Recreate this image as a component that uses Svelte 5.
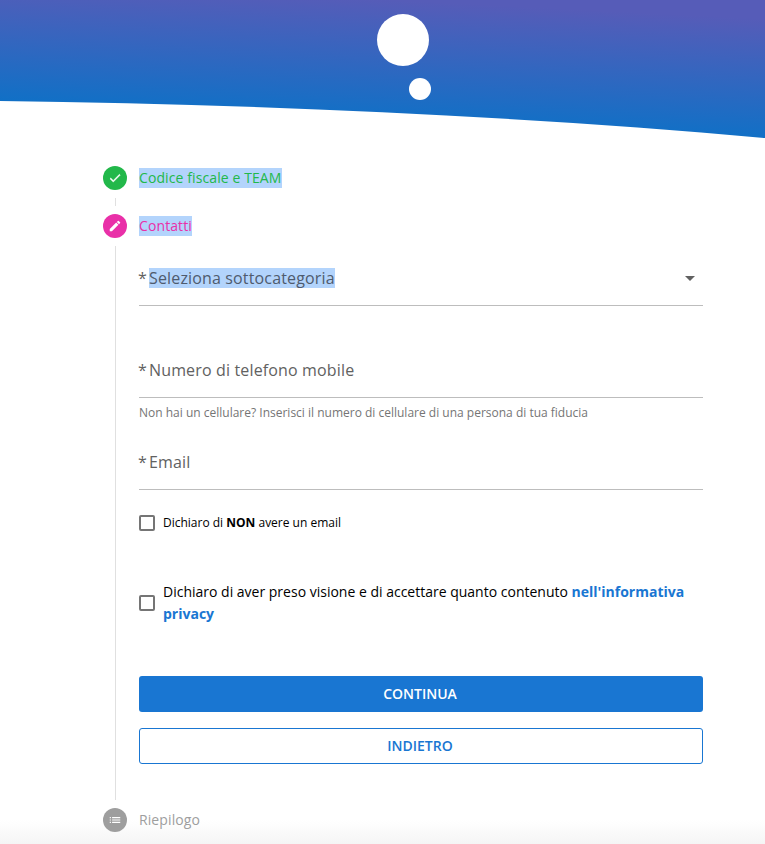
<script>
  const steps = { done: "Codice fiscale e TEAM", current: "Contatti", next: "Riepilogo" };
</script>

<div class="page">
  <header class="hero">
    <svg class="wave" viewBox="0 0 765 140" preserveAspectRatio="none" aria-hidden="true">
      <defs>
        <linearGradient id="sky" gradientUnits="userSpaceOnUse" x1="388" y1="0" x2="382" y2="119">
          <stop offset="0" stop-color="#565cb8" />
          <stop offset="1" stop-color="#1170c6" />
        </linearGradient>
      </defs>
      <path d="M0 0H765V138C520 116 250 104 0 101Z" fill="url(#sky)" />
      <circle cx="403" cy="40" r="26" fill="#fff" />
      <circle cx="420" cy="89" r="11" fill="#fff" />
    </svg>
  </header>

  <main class="stepper">
    <div class="step done">
      <span class="dot">
        <svg viewBox="0 0 24 24" width="14" height="14"><path d="M9 16.2 4.8 12l-1.4 1.4L9 19 21 7l-1.4-1.4z" fill="#fff" stroke="#fff" stroke-width="0.8" /></svg>
      </span>
      <span class="label picked">{steps.done}</span>
    </div>
    <div class="rail short"></div>
    <div class="step current">
      <span class="dot">
        <svg viewBox="0 0 24 24" width="14" height="14"><path d="M3 17.25V21h3.75L17.8 9.94l-3.75-3.75L3 17.25zM20.7 7.04a1 1 0 0 0 0-1.41l-2.34-2.34a1 1 0 0 0-1.41 0l-1.83 1.83 3.75 3.75 1.83-1.83z" fill="#fff" /></svg>
      </span>
      <span class="label picked">{steps.current}</span>
    </div>

    <div class="body">
      <form class="form" on:submit|preventDefault>
        <div class="field select">
          <span class="star">*</span><span class="text picked">Seleziona sottocategoria</span>
          <span class="caret"></span>
        </div>
        <div class="field phone">
          <span class="star">*</span><span class="text">Numero di telefono mobile</span>
        </div>
        <p class="hint">Non hai un cellulare? Inserisci il numero di cellulare di una persona di tua fiducia</p>
        <div class="field email">
          <span class="star">*</span><span class="text">Email</span>
        </div>

        <label class="check small">
          <span class="box"></span>
          <span>Dichiaro di <b>NON</b> avere un email</span>
        </label>
        <label class="check privacy">
          <span class="box"></span>
          <span>Dichiaro di aver preso visione e di accettare quanto contenuto <a href="#privacy">nell'informativa privacy</a></span>
        </label>

        <button class="btn primary" type="button">CONTINUA</button>
        <button class="btn outline" type="button">INDIETRO</button>
      </form>
    </div>

    <div class="step next">
      <span class="dot">
        <svg viewBox="0 0 24 24" width="14" height="14"><path d="M3 13h2v-2H3v2zm0 4h2v-2H3v2zm0-8h2V7H3v2zm4 4h14v-2H7v2zm0 4h14v-2H7v2zM7 7v2h14V7H7z" fill="#fff" /></svg>
      </span>
      <span class="label">{steps.next}</span>
    </div>
  </main>
  <div class="fade"></div>
</div>

<style>
  :global(body) {
    margin: 0;
    background: #fff;
  }

  .page {
    position: relative;
    height: 844px;
    overflow: hidden;
    font-family: "Open Sans", "Noto Sans", sans-serif;
    color: #000;
  }

  .hero {
    height: 166px;
  }

  .wave {
    display: block;
    width: 765px;
    height: 140px;
  }

  .stepper {
    position: relative;
    z-index: 1;
    padding-left: 103px;
    width: 600px;
  }

  .step {
    display: flex;
    align-items: center;
    gap: 12px;
    height: 24px;
    font-size: 14px;
    letter-spacing: 0.1px;
  }

  .dot {
    flex: none;
    width: 24px;
    height: 24px;
    border-radius: 50%;
    display: flex;
    align-items: center;
    justify-content: center;
  }

  .done .dot {
    background: #22b84a;
  }

  .done .label {
    color: #22b84a;
  }

  .current .dot {
    background: #e930a8;
  }

  .current .label {
    color: #e930a8;
  }

  .next .dot {
    background: #9e9e9e;
  }

  .next .label {
    color: #9e9e9e;
  }

  .picked {
    background: #b3d4fc;
  }

  .label {
    line-height: 20px;
  }

  .rail.short {
    width: 1px;
    height: 8px;
    margin: 8px 0 8px 12px;
    background: #e0e0e0;
  }

  .body {
    margin: 8px 0 8px 12px;
    padding: 0 0 36px 23px;
    border-left: 1px solid #e0e0e0;
  }

  .form {
    display: flex;
    flex-direction: column;
    width: 564px;
  }

  .field {
    position: relative;
    box-sizing: border-box;
    height: 54px;
    padding-bottom: 1px;
    display: flex;
    align-items: center;
    border-bottom: 1px solid #bdbdbd;
    font-size: 16px;
    letter-spacing: 0.15px;
    color: #616161;
  }

  .star {
    width: 11px;
    margin-left: -1px;
    color: #616161;
  }

  .select {
    margin-top: 6px;
  }

  .select .text {
    color: #4f5b6e;
    line-height: 20px;
  }

  .caret {
    position: absolute;
    right: 8px;
    top: 24px;
    border-left: 5px solid transparent;
    border-right: 5px solid transparent;
    border-top: 5px solid #616161;
  }

  .phone {
    margin-top: 38px;
  }

  .hint {
    margin: 6px 0 0;
    font-size: 12px;
    line-height: 17px;
    color: #757575;
  }

  .email {
    margin-top: 15px;
  }

  .check {
    display: flex;
    align-items: center;
    gap: 8px;
  }

  .box {
    flex: none;
    box-sizing: border-box;
    width: 16px;
    height: 16px;
    border: 2px solid #757575;
    border-radius: 2px;
  }

  .small {
    margin-top: 24px;
    font-size: 12px;
    line-height: 18px;
  }

  .privacy {
    margin-top: 49px;
    font-size: 14px;
    line-height: 22px;
  }

  .privacy a {
    color: #1976d2;
    font-weight: 700;
    text-decoration: none;
  }

  .btn {
    height: 36px;
    padding: 0 2px 2px 0;
    border-radius: 3px;
    font: 600 14px "Open Sans", sans-serif;
    cursor: pointer;
  }

  .primary {
    margin-top: 51px;
    background: #1976d2;
    border: 0;
    color: #fff;
  }

  .outline {
    margin-top: 16px;
    background: #fff;
    border: 1px solid #1976d2;
    color: #1976d2;
  }

  .fade {
    position: absolute;
    left: 0;
    right: 0;
    bottom: 0;
    height: 24px;
    background: linear-gradient(to bottom, rgba(245, 245, 245, 0), #f5f5f5);
    pointer-events: none;
  }
</style>
